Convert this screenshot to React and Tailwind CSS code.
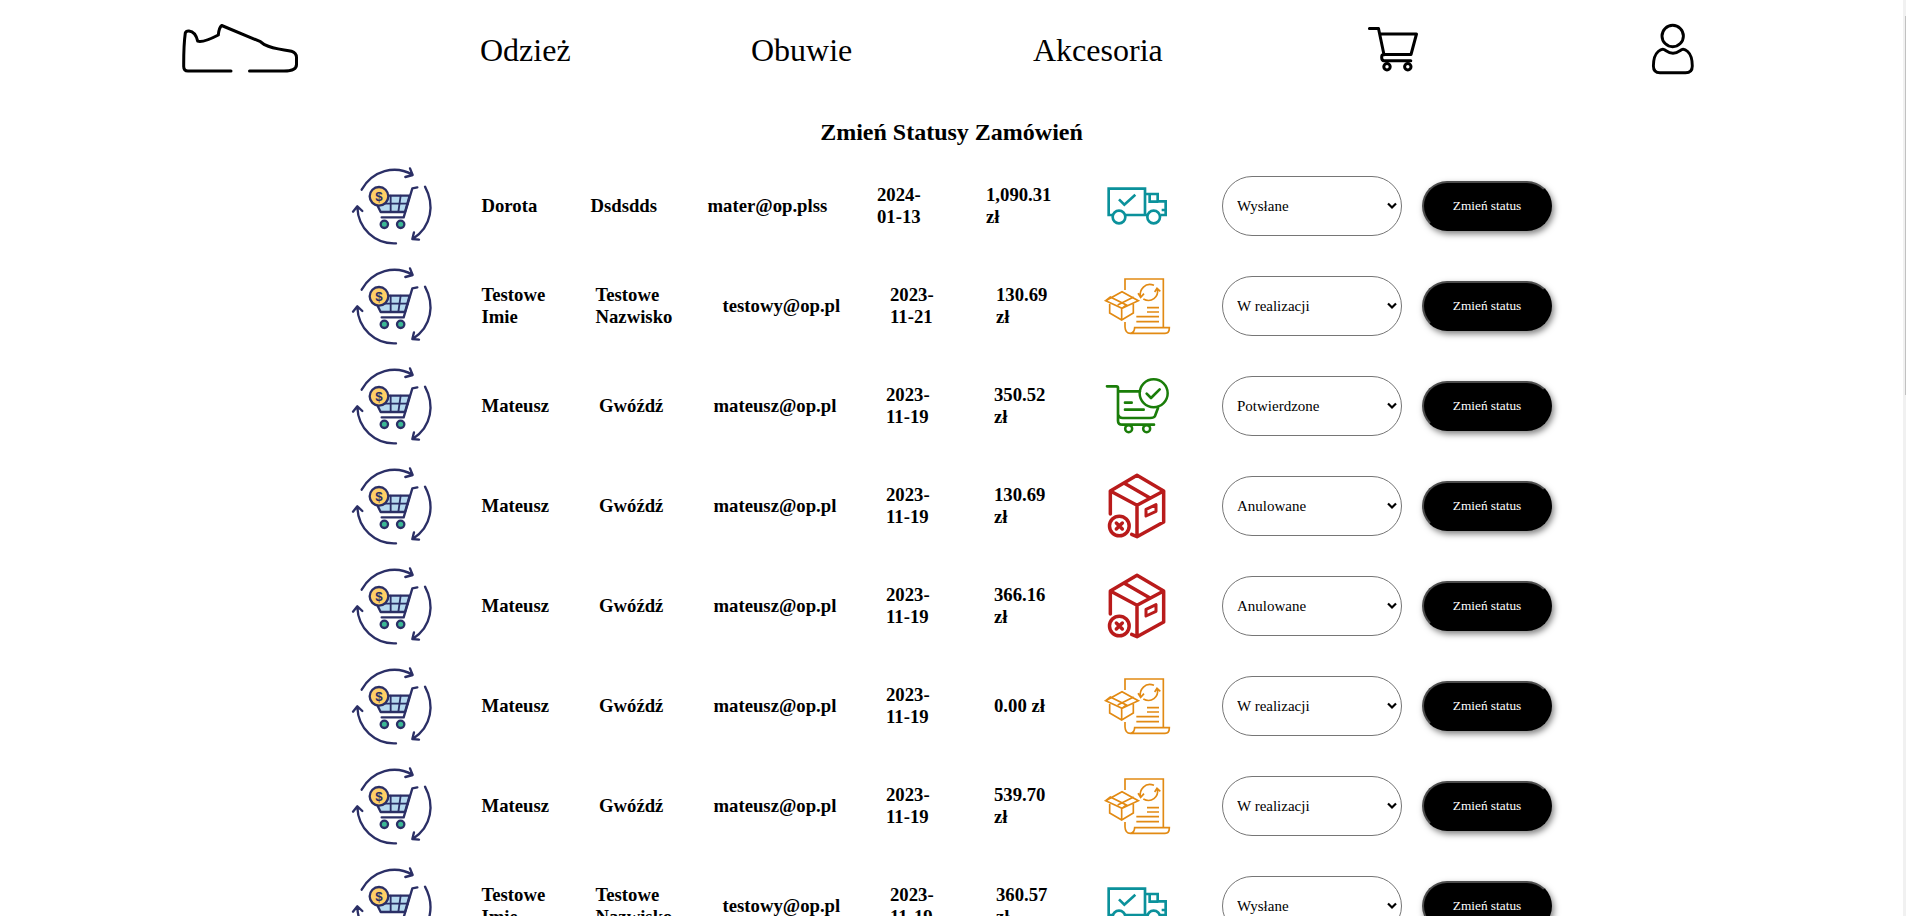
const NAVY = '#2b2f66';

function Shoe() {
  return (
    <svg width="118" height="52" viewBox="180 24 118 52" fill="none" stroke="#000" strokeWidth="3" strokeLinecap="round" strokeLinejoin="round">
      <path d="M231 71H188Q183.700 71 183.700 66.500Q183.600 45 185.300 33Q186 30.800 189 31C194 31.500 196.500 36 197.700 41.200Q203 43 218.300 35Q219 27.500 221.700 25.500L260.500 41.700L264.500 44.700C275 50 286 49.500 291.500 51.300Q296.500 53 296.500 57.500V64.500C296.500 69 291 71 284 71H249.500" />
    </svg>
  );
}

function Cart() {
  return (
    <svg width="52" height="48" viewBox="1367 26 52 48" fill="none" stroke="#000" strokeWidth="3" strokeLinecap="round" strokeLinejoin="round">
      <path d="M1369.400 28.500H1378.500L1384 54.700M1380.500 34H1416.500L1411 54.500H1383.500C1381 54.700 1381 60.500 1384 60.700H1410.800" />
      <circle cx="1387" cy="66.700" r="3.200" />
      <circle cx="1407.800" cy="66.700" r="3.200" />
    </svg>
  );
}

function Person() {
  return (
    <svg width="44" height="52" viewBox="1651 24 44 52" className="overflow-visible" fill="none" stroke="#000" strokeWidth="2.900" strokeLinejoin="round">
      <circle cx="1672.700" cy="36" r="10.700" />
      <path d="M1664.500 49.700C1668 52 1669.500 53.300 1673 53.300C1676.500 53.300 1678 52 1681.500 49.700C1683.500 48.700 1692.300 50 1692.300 66Q1692.300 72.700 1685.500 72.700H1660Q1653.400 72.700 1653.400 66C1653.400 50 1662.500 48.700 1664.500 49.700Z" />
    </svg>
  );
}

function OrderIcon() {
  return (
    <svg width="100" height="100" viewBox="0 0 300 300" fill="none" stroke={NAVY} strokeWidth="7" strokeLinecap="round" strokeLinejoin="round">
      <path d="M35 101C68 43 135 26 187 56M180 37L188 57L166 63" />
      <path d="M225 92C254 145 246 212 189 248M192 229L187 249L207 251" />
      <path d="M138 262C75 265 24 218 22 153M9 167L22 151L37 165" />
      <path d="M88 119H179L165 168H92L82 148" fill="#b5d9ee" />
      <path d="M122 119V168M152 119L145 168M104 143H174" strokeWidth="5.500" />
      <path d="M202 94L187 97L161 184H95" />
      <circle cx="87" cy="121" r="28" fill="#ffcf66" />
      <text x="87" y="135" textAnchor="middle" fontFamily="Liberation Sans" fontSize="40" fontWeight="bold" fill={NAVY} stroke="none">$</text>
      <circle cx="103" cy="205" r="11" fill="#3cb995" />
      <circle cx="152" cy="205" r="11" fill="#3cb995" />
    </svg>
  );
}

function Truck() {
  return (
    <svg width="70" height="70" viewBox="36 33 210 210" fill="none" stroke="#0b919b" strokeWidth="8">
      <path d="M70 165H56V86H165V165H107M165 102H203V124H227V165H213M165 165H171M179 102V125H205M229 150H215" />
      <path d="M87 118L103 134L136 104" />
      <circle cx="87" cy="171" r="19" />
      <circle cx="191" cy="171" r="19" />
    </svg>
  );
}

function Processing() {
  return (
    <svg width="70" height="70" viewBox="36 18 210 210" fill="none" stroke="#e28a13" strokeWidth="5">
      <path d="M105 75V42H220V187M105 171V186Q106 205 121 205Q133 204 134 188H238Q238 205 225 205H121" />
      <path d="M47 107L96 80L145 107L96 130ZM47 107L61 96L109 120L96 130M131 96L83 120M59 117V144L95 165L130 144V117M95 130V165" />
      <path d="M151 97C147 73 166 51 192 61M144 85L152 97L162 86M202 72C207 96 184 115 160 102M194 81L201 70L211 79M171 128H207M171 141H207M139 155H207M139 170H207" />
    </svg>
  );
}

function Confirmed() {
  return (
    <svg width="70" height="70" viewBox="36 33 210 210" fill="none" stroke="#1a7d09" strokeWidth="8" strokeLinecap="round" strokeLinejoin="round">
      <path d="M51 79H79Q84 79 84 84V182Q84 194 97 194H192M85 94H150M85 165Q87 174 98 174H180Q192 174 195 168L204 144M105 128H125M105 149H161" />
      <circle cx="191" cy="100" r="42" strokeWidth="7.500" />
      <path d="M170 101L183 114L209 88" />
      <circle cx="116" cy="206" r="10.500" strokeWidth="7.500" />
      <circle cx="170" cy="206" r="10.500" strokeWidth="7.500" />
    </svg>
  );
}

function Cancelled() {
  return (
    <svg width="70" height="70" viewBox="36 33 210 210" fill="none" stroke="#b91b1b" strokeWidth="10.500" strokeLinecap="round" strokeLinejoin="round">
      <path d="M61 162V93L141 46L221 93V186L141 230L125 223M61 93L141 136V230M141 136L221 93M102 69L180 114" />
      <path d="M168 148L198 134V154L168 168Z" strokeWidth="9" />
      <circle cx="88" cy="198" r="29.500" />
      <path d="M79 189L97 207M97 189L79 207" />
    </svg>
  );
}

const STATUSES = {
  'Wysłane': Truck,
  'W realizacji': Processing,
  'Potwierdzone': Confirmed,
  'Anulowane': Cancelled,
};

const COLUMNS = {
  dorota: 'grid-cols-[109px_117px_169.5px_109px_97.5px]',
  testowe: 'grid-cols-[114px_127px_167.5px_106px_87.5px]',
  mateusz: 'grid-cols-[117.5px_114.5px_172.5px_108px_89.5px]',
};

const ORDERS = [
  ['dorota', 'Dorota', 'Dsdsdds', 'mater@op.plss', '2024-', '01-13', '1,090.31', 'Wysłane'],
  ['testowe', 'Testowe Imie', 'Testowe Nazwisko', 'testowy@op.pl', '2023-', '11-21', '130.69', 'W realizacji'],
  ['mateusz', 'Mateusz', 'Gwóźdź', 'mateusz@op.pl', '2023-', '11-19', '350.52', 'Potwierdzone'],
  ['mateusz', 'Mateusz', 'Gwóźdź', 'mateusz@op.pl', '2023-', '11-19', '130.69', 'Anulowane'],
  ['mateusz', 'Mateusz', 'Gwóźdź', 'mateusz@op.pl', '2023-', '11-19', '366.16', 'Anulowane'],
  ['mateusz', 'Mateusz', 'Gwóźdź', 'mateusz@op.pl', '2023-', '11-19', '0.00', 'W realizacji'],
  ['mateusz', 'Mateusz', 'Gwóźdź', 'mateusz@op.pl', '2023-', '11-19', '539.70', 'W realizacji'],
  ['testowe', 'Testowe Imie', 'Testowe Nazwisko', 'testowy@op.pl', '2023-', '11-19', '360.57', 'Wysłane'],
];

function Order({ order }) {
  const [layout, first, last, email, year, day, price, status] = order;
  const Icon = STATUSES[status];
  return (
    <li className="flex h-[100px] shrink-0 items-center pl-[350px]">
      <OrderIcon />
      <div className={`ml-[31.5px] grid items-center text-[18.72px] leading-[22px] font-bold ${COLUMNS[layout]}`}>
        <span className="w-min">{first}</span>
        <span className="w-min">{last}</span>
        <span>{email}</span>
        <span>{year}<br />{day}</span>
        <span>{price}{price === '0.00' ? ' ' : <br />}zł</span>
      </div>
      <div className="ml-[18.5px] h-[70px] w-[70px]"><Icon /></div>
      <div className="relative ml-[50px] flex h-[60px] w-[180px] items-center">
        <select defaultValue={status} className="h-full w-full appearance-none rounded-[30px] border border-[#767676] bg-white pl-[14px] text-[15px] text-black">
          {Object.keys(STATUSES).map((s) => <option key={s}>{s}</option>)}
        </select>
        <svg className="pointer-events-none absolute top-[26px] right-[5px]" width="10" height="8" viewBox="0 0 10 8" fill="none" stroke="#000" strokeWidth="2.200">
          <path d="M1 1.500L5 5.500L9 1.500" />
        </svg>
      </div>
      <button className="ml-5 h-[50px] w-[130px] rounded-[25px] border-2 border-t-[#4c4c4c] border-r-black border-b-black border-l-[#4c4c4c] bg-black text-[13.333px] text-white shadow-[2px_3px_6px_rgba(0,0,0,0.5)]">Zmień status</button>
    </li>
  );
}

export default function App() {
  return (
    <div className="flex h-[916px] w-full overflow-hidden bg-white pr-2 font-['Liberation_Serif',serif] text-black">
      <main className="flex min-w-0 flex-1 flex-col">
        <nav className="flex h-[100px] shrink-0 items-center text-[32px]">
          <div className="ml-[180px] w-[300px]"><Shoe /></div>
          <a className="w-[271px]">Odzież</a>
          <a className="w-[282px]">Obuwie</a>
          <a className="w-[334px]">Akcesoria</a>
          <div className="w-[284px]"><Cart /></div>
          <Person />
        </nav>
        <h1 className="h-[56px] shrink-0 pt-[18px] text-center text-[24px] leading-[28px] font-bold">Zmień Statusy Zamówień</h1>
        <ul className="flex flex-col">
          {ORDERS.map((order, i) => <Order key={i} order={order} />)}
        </ul>
      </main>
      <div className="w-[3px] shrink-0 bg-[#f1f1f1] pt-4 pl-0.5">
        <div className="h-[379px] bg-[#c1c1c1]" />
      </div>
    </div>
  );
}
